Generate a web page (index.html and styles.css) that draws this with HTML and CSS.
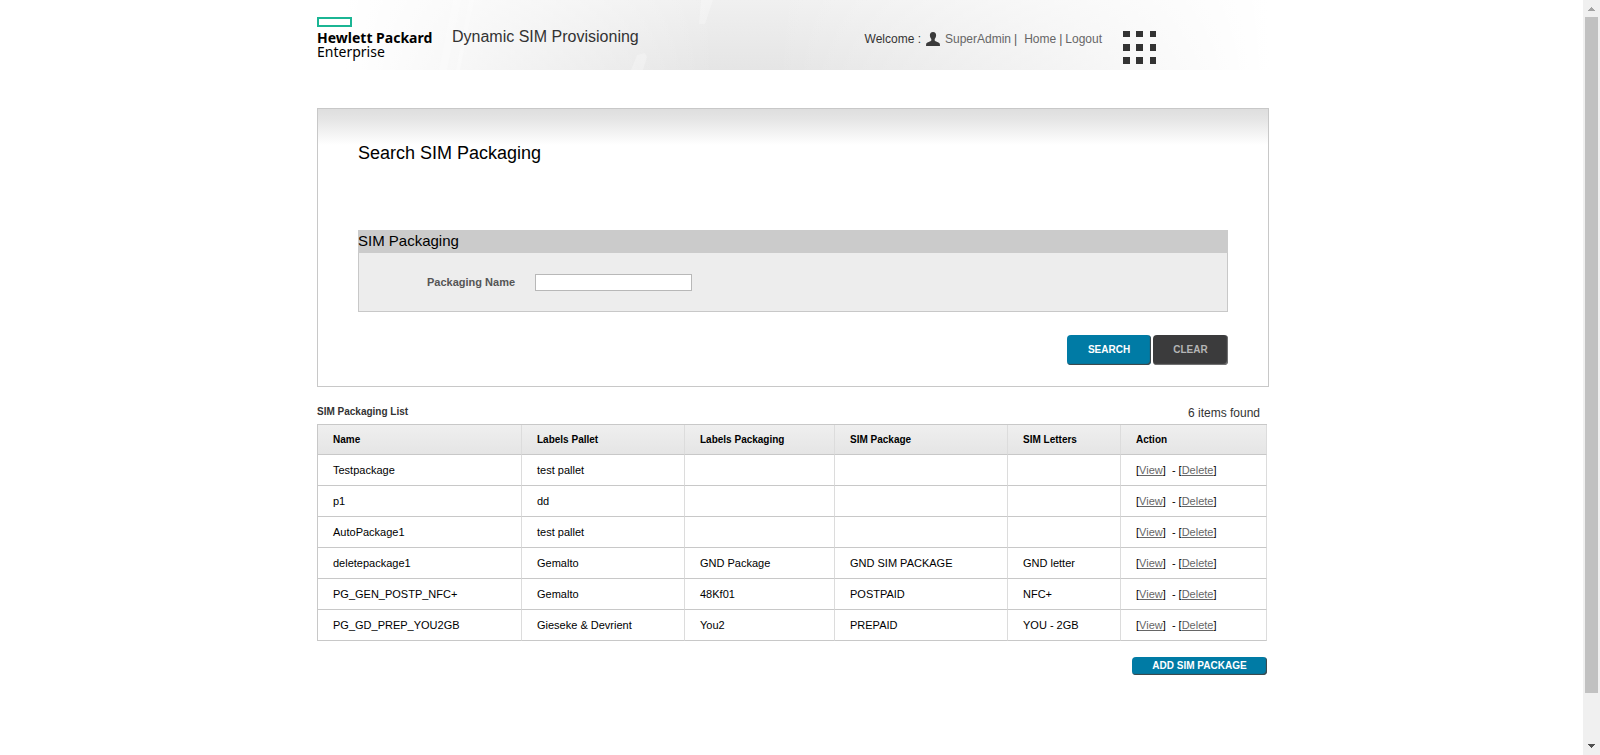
FILE: index.html
```html
<!DOCTYPE html>
<html lang="en">
<head>
<meta charset="utf-8">
<title>Dynamic SIM Provisioning</title>
<link rel="stylesheet" href="styles.css">
</head>
<body>
<div class="viewport">
  <div class="page">
    <header class="banner">
      <svg class="banner-art" viewBox="0 0 952 70" preserveAspectRatio="none" aria-hidden="true">
        <path d="M136 0h8l-14 70h-8zM152 0h5l-14 70h-4zM314 70l6-15 8-2 2 4-4 13zM384 0h12l-8 24h-6z" fill="#fff" fill-opacity=".25"/>
      </svg>
      <div class="logo">
        <svg class="logo-mark" width="35" height="10" viewBox="0 0 35 10" aria-hidden="true"><path d="M1 1h33v8H1z" fill="#fff" stroke="#1bb594" stroke-width="2"/></svg>
        <span class="logo-name">Hewlett Packard</span>
        <span class="logo-sub">Enterprise</span>
      </div>
      <div class="product">Dynamic SIM Provisioning</div>
      <nav class="account">
        <span class="welcome">Welcome :</span>
        <svg class="user" width="14" height="14" viewBox="0 0 14 14" aria-hidden="true"><path d="M7 0c2.100 0 3.300 1.500 3.100 3.600C10 5.200 9.400 6.300 8.700 7v1.400c.3 1 4.600 1.600 5.100 3.400L14 14H0l.2-2.200C.7 10 5 9.400 5.300 8.400V7C4.600 6.300 4 5.200 3.900 3.600 3.700 1.500 4.900 0 7 0z" fill="#3b3b3b"/></svg>
        <a href="#user">SuperAdmin</a><span class="bar wide">|</span><a href="#home">Home</a><span class="bar">|</span><a href="#logout">Logout</a>
      </nav>
      <button class="apps" type="button" aria-label="Applications">
        <svg width="33" height="33" viewBox="0 0 33 33" aria-hidden="true"><path d="M0 0h7v6H0zM13 0h7v6h-7zM27 0h6v6h-6zM0 13h7v7H0zM13 13h7v7h-7zM27 13h6v7h-6zM0 26h7v7H0zM13 26h7v7h-7zM27 26h6v7h-6z" fill="#333"/></svg>
      </button>
    </header>

    <main>
      <form class="panel">
        <h1>Search SIM Packaging</h1>
        <section class="group">
          <h2>SIM Packaging</h2>
          <div class="field">
            <label for="packaging-name">Packaging Name</label>
            <input id="packaging-name" type="text">
          </div>
        </section>
        <div class="buttons">
          <button class="btn search" type="button">SEARCH</button>
          <button class="btn clear" type="reset">CLEAR</button>
        </div>
      </form>

      <section class="list">
        <div class="list-head">
          <h3>SIM Packaging List</h3>
          <span>6 items found</span>
        </div>
        <table>
          <colgroup><col class="c-name"><col class="c-pallet"><col class="c-labels"><col class="c-package"><col class="c-letters"><col class="c-action"></colgroup>
          <thead>
            <tr><th>Name</th><th>Labels Pallet</th><th>Labels Packaging</th><th>SIM Package</th><th>SIM Letters</th><th>Action</th></tr>
          </thead>
          <tbody>
            <tr><td>Testpackage</td><td>test pallet</td><td></td><td></td><td></td><td>[<a href="#v1">View</a>]&nbsp; - [<a href="#d1">Delete</a>]</td></tr>
            <tr><td>p1</td><td>dd</td><td></td><td></td><td></td><td>[<a href="#v2">View</a>]&nbsp; - [<a href="#d2">Delete</a>]</td></tr>
            <tr><td>AutoPackage1</td><td>test pallet</td><td></td><td></td><td></td><td>[<a href="#v3">View</a>]&nbsp; - [<a href="#d3">Delete</a>]</td></tr>
            <tr><td>deletepackage1</td><td>Gemalto</td><td>GND Package</td><td>GND SIM PACKAGE</td><td>GND letter</td><td>[<a href="#v4">View</a>]&nbsp; - [<a href="#d4">Delete</a>]</td></tr>
            <tr><td>PG_GEN_POSTP_NFC+</td><td>Gemalto</td><td>48Kf01</td><td>POSTPAID</td><td>NFC+</td><td>[<a href="#v5">View</a>]&nbsp; - [<a href="#d5">Delete</a>]</td></tr>
            <tr><td>PG_GD_PREP_YOU2GB</td><td>Gieseke &amp; Devrient</td><td>You2</td><td>PREPAID</td><td>YOU - 2GB</td><td>[<a href="#v6">View</a>]&nbsp; - [<a href="#d6">Delete</a>]</td></tr>
          </tbody>
        </table>
        <div class="list-foot"><button class="btn add" type="button">ADD SIM PACKAGE</button></div>
      </section>
    </main>
  </div>
  <div class="scrollbar" aria-hidden="true">
    <svg width="17" height="17" viewBox="0 0 17 17"><path d="M8 7h1v1h1v1h1v1h1v1H5v-1h1V9h1V8h1z" fill="#a3a3a3"/></svg>
    <div class="track"><div class="thumb"></div></div>
    <svg width="17" height="17" viewBox="0 0 17 17"><path d="M5 6h7v1h-1v1h-1v1H9v1H8V9H7V8H6V7H5z" fill="#505050"/></svg>
  </div>
</div>
</body>
</html>
```
FILE: styles.css
```css
* { box-sizing: border-box; }

body {
  margin: 0;
  background: #fff;
  color: #000;
  font: 11px/14px "Liberation Sans", Arial, sans-serif;
}

h1, h2, h3 { margin: 0; font-weight: normal; }

.viewport { display: flex; min-height: 100vh; }

.page {
  flex: 1;
  max-width: 955px;
  margin: 0 auto;
  padding-left: 3px;
}

/* Banner */
.banner {
  position: relative;
  display: flex;
  align-items: flex-start;
  height: 70px;
  background:
    linear-gradient(90deg, #fff 3%, rgba(255, 255, 255, 0) 42%, rgba(255, 255, 255, 0) 48%, #fff 100%),
    linear-gradient(180deg, #f0f0f0, #e5e5e5);
}

.banner-art {
  position: absolute;
  inset: 0;
  width: 100%;
  height: 100%;
}

.banner > :not(.banner-art) { position: relative; }

.logo {
  display: flex;
  flex-direction: column;
  width: 135px;
  padding-top: 17px;
  font-family: "Noto Sans", "Open Sans", sans-serif;
  font-size: 14px;
  line-height: 14px;
  white-space: nowrap;
}

.logo-mark { margin-bottom: 4px; }
.logo-name { font-weight: bold; }

.product {
  padding-top: 27px;
  color: #333;
  font-size: 16px;
  line-height: 20px;
}

.account {
  display: flex;
  align-items: center;
  margin-left: auto;
  padding-top: 31px;
  color: #333;
  font-size: 12px;
  line-height: 16px;
}

.account a { color: #666; text-decoration: none; }
.user { margin: 0 5px; }
.bar { margin: 0 3px; color: #555; }
.wide { margin-right: 7px; }

.apps {
  display: flex;
  margin: 31px 113px 0 21px;
  padding: 0;
  border: 0;
  background: none;
}

/* Search panel */
.panel {
  margin-top: 38px;
  padding: 32px 40px 21px;
  border: 1px solid #c8c8c8;
  background: linear-gradient(180deg, #dedede 0, #e5e5e5 10px, #fff 36px);
}

.panel h1 {
  margin-bottom: 65px;
  font-size: 18px;
  line-height: 24px;
}

.group {
  border: 1px solid #c8c8c8;
  border-top: 0;
  background: #ededed;
}

.group h2 {
  margin: 0 -1px;
  padding-bottom: 2px;
  background: #cbcbcb;
  font-size: 15px;
  line-height: 21px;
}

.field {
  display: flex;
  align-items: center;
  gap: 20px;
  padding: 20px 0 20px 68px;
}

.field label { color: #555; font-weight: bold; line-height: 18px; }

.field input {
  width: 157px;
  height: 17px;
  padding: 0 2px;
  border: 1px solid #b8b8b8;
  background: #fff;
  font: inherit;
}

.buttons {
  display: flex;
  justify-content: flex-end;
  gap: 2px;
  padding-top: 23px;
}

.btn {
  padding: 0 20px;
  border: 0;
  border-radius: 4px;
  background: #007ba5;
  box-shadow: inset -1px -1px 1px #444;
  color: #fff;
  font: bold 10px/30px "Liberation Sans", Arial, sans-serif;
}

.search { width: 84px; }
.clear { width: 75px; background: #3b3b3c; box-shadow: inset -1px -1px 1px #777; color: #b5b5b5; }

/* Package list */
.list { padding-right: 2px; }

.list-head {
  display: flex;
  justify-content: space-between;
  padding: 17px 7px 1px 0;
}

.list-head h3 { color: #333; font-size: 10px; font-weight: bold; line-height: 16px; }
.list-head span { color: #333; font-size: 12px; line-height: 19px; }

table {
  width: 100%;
  border: solid #c8c8c8;
  border-width: 1px 0 0 1px;
  border-spacing: 0;
  table-layout: fixed;
}

.c-name { width: 204px; }
.c-pallet { width: 163px; }
.c-labels { width: 150px; }
.c-package { width: 173px; }
.c-letters { width: 113px; }

th, td {
  padding: 8px 15px;
  border-right: 1px solid #dcdcdc;
  border-bottom: 1px solid #c8c8c8;
  text-align: left;
}

th { font-size: 10px; line-height: 13px; background: linear-gradient(180deg, #efefef, #e5e5e5); }
td { height: 31px; }
td a { color: #666; }

.list-foot { display: flex; justify-content: flex-end; padding-top: 16px; }
.add { width: 135px; line-height: 18px; }

/* Scrollbar */
.scrollbar {
  display: flex;
  flex-direction: column;
  width: 17px;
  background: #f0f0f0;
}

.track { flex: 1; padding: 0 2px; }
.thumb { height: calc(100vh * 0.895); background: #c1c1c1; }
```
